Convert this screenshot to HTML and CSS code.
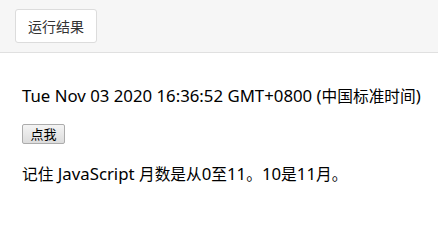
FILE: index.html
```html
<!DOCTYPE html>
<html lang="zh">
<head>
<meta charset="utf-8">
<link rel="stylesheet" href="styles.css">
</head>
<body>
<div class="toolbar">
  <button class="tab-btn">运行结果</button>
</div>
<div class="result">
  <p class="line date">Tue Nov 03 2020 16:36:52 GMT+0800 (<span class="cjk">中国标准时间</span>)</p>
  <div class="btn-row"><button class="click-btn">点我</button></div>
  <p class="line note"><span class="cjk">记住</span> JavaScript <span class="cjk">月数是从</span>0<span class="cjk">至</span>11<span class="cjk">。</span>10<span class="cjk">是</span>11<span class="cjk">月。</span></p>
</div>
</body>
</html>
```

FILE: styles.css
```css
html, body {
  margin: 0;
  padding: 0;
  background: #ffffff;
}
body {
  font-family: "Noto Sans", "Noto Sans CJK SC", sans-serif;
  color: #000;
}
.toolbar {
  box-sizing: border-box;
  height: 53px;
  padding: 9px 0 0 15px;
  background: #f6f6f6;
  border-bottom: 1px solid #e0e0e0;
}
.tab-btn {
  display: block;
  box-sizing: border-box;
  width: 82px;
  height: 34px;
  padding: 0;
  background: #fff;
  border: 1px solid #dcdcdc;
  border-radius: 3px;
  font-family: "Noto Sans CJK SC", sans-serif;
  font-size: 14px;
  color: #333;
}
.result {
  padding-left: 22px;
  font-size: 16.8px;
}
.line {
  margin: 0;
  line-height: 22px;
}
.cjk {
  font-family: "Noto Sans CJK SC", sans-serif;
  font-size: 15.7px;
}
.date {
  margin-top: 32px;
}
.btn-row {
  display: flex;
  margin-top: 17px;
}
.click-btn {
  box-sizing: border-box;
  width: 43px;
  height: 20px;
  padding: 0;
  font-family: "Noto Sans CJK SC", sans-serif;
  font-size: 13px;
  line-height: 18px;
  color: #000;
  background: linear-gradient(#f4f4f4, #dcdcdc);
  border: 1px solid #acacac;
  border-radius: 2px;
}
.note {
  margin-top: 19px;
}
```
